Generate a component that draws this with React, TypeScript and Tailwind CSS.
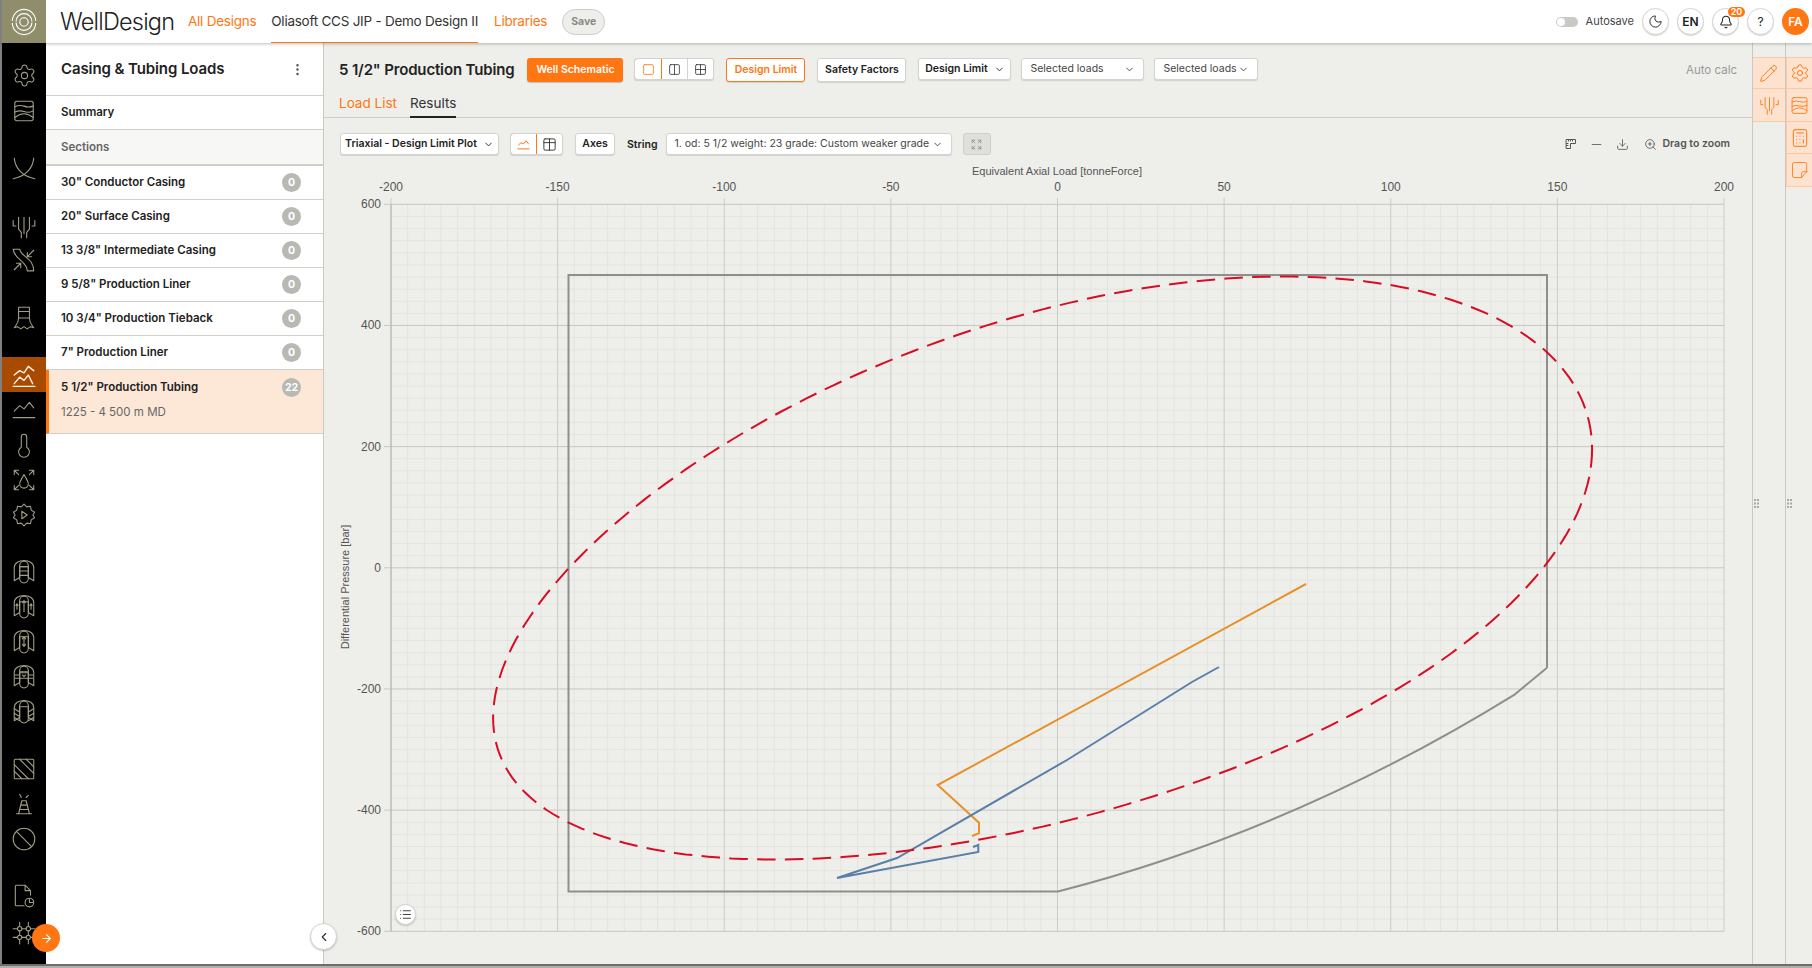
import React from "react";
import { Settings, Pencil, Calculator, Moon, Bell, ChevronDown, ChevronLeft, ArrowRight, EllipsisVertical, Download, ZoomIn, Minus, Square, Columns2, Grid2x2, List } from "lucide-react";

const font = { fontFamily: "Inter, 'Liberation Sans', sans-serif" };

type P = { className?: string; children?: React.ReactNode; sw?: number };
const Ic = ({ className = "w-[26px] h-[26px]", children, sw = 1 }: P) => (
  <svg viewBox="0 0 24 24" fill="none" stroke="currentColor" strokeWidth={sw} strokeLinecap="round" strokeLinejoin="round" className={className}>
    {children}
  </svg>
);

const Layers = (p: P) => (
  <Ic {...p}>
    <rect x="3.5" y="3" width="17" height="18" rx="2" />
    <path d="M3.5 8Q8 6 12 7.5T20.5 7.5M3.5 13Q8 11 12 12.5T20.5 12M3.5 18Q12 11 20.5 18" />
  </Ic>
);
const Cross = (p: P) => (
  <Ic {...p}>
    <path d="M3 2C4 12 11 19 22 21M21 2C20 12 13 19 2 21" />
  </Ic>
);
const Tree = (p: P) => (
  <Ic {...p}>
    <path d="M2 6v5h2.5M22 6v5h-2.5M7 3v11l2.5 3v5M17 3v11l-2.500 3v5M12 3v15" />
  </Ic>
);
const Road = (p: P) => (
  <Ic {...p}>
    <path d="M2 2h6c1 7 13 8 13 20h-6C15 13 3 12 2 2zM21 3l-6 6M15 5v4h4M3 21l6-6M5 15h4v4" />
  </Ic>
);
const Bit = (p: P) => (
  <Ic {...p}>
    <path d="M7 2h10v10H7zM7 6h10M7 12c0 5-2 6-4 9l3-1 3 2 3-2 3 2 3-2 3 1c-2-3-4-4-4-9" />
  </Ic>
);
const Mount1 = (p: P) => (
  <Ic {...p} sw={1.3}>
    <path d="M3 12l5-4 4 2 4-6 5 4M3 20l5-6 4 3 4-5 4 8M2 22.500h20" />
  </Ic>
);
const Mount2 = (p: P) => (
  <Ic {...p}>
    <path d="M3 13l5-5 4 3 5-6 4 5M2 19h20" />
  </Ic>
);
const Thermo = (p: P) => (
  <Ic {...p}>
    <path d="M9.500 14V4.500a2.500 2.500 0 015 0V14a5 5 0 11-5 0z" />
  </Ic>
);
const Drop = (p: P) => (
  <Ic {...p}>
    <path d="M12 7c-2 4-4 6-4 8.500a4 4 0 008 0C16 13 14 11 12 7zM3 3l4 4M3 7V3h4M21 3l-4 4M21 7V3h-4M3 21l4-4M3 17v4h4M21 21l-4-4M21 17v4h-4" />
  </Ic>
);
const GearPlay = (p: P) => (
  <Ic {...p}>
    <path d="M12 2l2.500 2.500 3.500-.5.700 3.500 3 2-1.500 2.500 1.500 2.500-3 2-.7 3.500-3.500-.5L12 22l-2.500-2.500-3.500.5-.7-3.500-3-2L3.800 12 2.300 9.500l3-2L6 4l3.500.5z" />
    <path d="M10 8.500l5 3.500-5 3.500z" />
  </Ic>
);
const Well = ({ v, ...p }: P & { v: number }) => (
  <Ic {...p}>
    <path d="M3 21V9c0-9 18-9 18 0v12l-5-3V8H8v10z" />
    <rect x="8" y="3" width="8" height="20" rx="4" />
    {v === 0 && <path d="M8 8h8M8 12h8M8 16h8" />}
    {v === 1 && <path d="M12 7v10M10.500 9L12 7l1.500 2M5.500 15V10M4.500 11.500l1-1.500 1 1.500M18.500 15V10M17.500 11.500l1-1.500 1 1.500" />}
    {v === 2 && <path d="M12 8v9M10.500 10L12 8l1.500 2M10.500 15l1.500 2 1.500-2" />}
    {v === 3 && <path d="M8 9h8M8 14h8M10.500 11L12 12.500 13.500 11M4 11h3M4 14h3M17 11h3M17 14h3" />}
    {v === 4 && <path d="M3 10l5 3M3 14l5 3M3 18l5 3M21 10l-5 3M21 14l-5 3M21 18l-5 3" />}
  </Ic>
);
const Hatch = (p: P) => (
  <Ic {...p}>
    <rect x="3" y="3" width="18" height="18" rx="1" />
    <path d="M3 8l13 13M3 14l7 7M8 3l13 13M14 3l7 7" />
  </Ic>
);
const Cone = (p: P) => (
  <Ic {...p}>
    <path d="M10 9h4l3 12H7zM9 13h6M8 17h8M5 21h14M8 3l1.500 3M16 4l-2 2" />
  </Ic>
);
const Ban = (p: P) => (
  <Ic {...p}>
    <circle cx="12" cy="12" r="10" />
    <path d="M5 5l14 14" />
  </Ic>
);
const DocClock = (p: P) => (
  <Ic {...p}>
    <path d="M12 21H5a1 1 0 01-1-1V3a1 1 0 011-1h8l5 5v4M13 2v5h5" />
    <circle cx="17" cy="18" r="4" />
    <path d="M17 15v3h3" />
  </Ic>
);
const GridNodes = (p: P) => (
  <Ic {...p}>
    <path d="M8 2v20M16 2v20M2 8h20M2 16h20" />
    <circle cx="8" cy="8" r="2" fill="black" />
    <circle cx="16" cy="8" r="2" fill="black" />
    <circle cx="8" cy="16" r="2" fill="black" />
    <circle cx="16" cy="16" r="2" fill="black" />
  </Ic>
);
const Note = (p: P) => (
  <Ic {...p}>
    <path d="M20 14V5a2 2 0 00-2-2H5a2 2 0 00-2 2v14a2 2 0 002 2h9l6-7zM14 21v-5a2 2 0 012-2h4" />
  </Ic>
);
const Ruler2 = (p: P) => (
  <Ic {...p}>
    <path d="M3 3h18v8h-10v10H3zM7 3v3M11 3v3M15 3v3M3 11h3M3 15h3" />
  </Ic>
);
const LineIcon = (p: P) => (
  <Ic {...p} sw={1.6}>
    <path d="M4 13l4-4 4 2 4-5 4 5M3 19h18" />
  </Ic>
);
const TableIcon = (p: P) => (
  <Ic {...p} sw={1.5}>
    <rect x="3" y="3" width="18" height="18" rx="2" />
    <path d="M3 9h18M12 3v18" />
  </Ic>
);
const ExpandIcon = (p: P) => (
  <Ic {...p} sw={1.5}>
    <path d="M4 4l5 5M4 9V4h5M20 4l-5 5M20 9V4h-5M4 20l5-5M4 15v5h5M20 20l-5-5M20 15v5h-5" />
  </Ic>
);
const Logo = () => (
  <svg viewBox="0 0 30 30" fill="none" stroke="white" strokeWidth="1.2" className="h-[28px] w-[28px]">
    <path d="M2.500 14a12.500 12.500 0 0125 0M27.500 16a12.500 12.500 0 01-25 0" />
    <path d="M6.500 14.500a8.500 8.500 0 0117 0M23.500 15.500a8.500 8.500 0 01-17 0" />
    <circle cx="15" cy="15" r="4.500" />
  </svg>
);
const Grip = () => (
  <svg viewBox="0 0 5 9" className="absolute left-[1px] top-[456px] h-[9px] w-[5px]" fill="#aaaaa5">
    <rect x="0" y="0" width="2" height="2" />
    <rect x="3" y="0" width="2" height="2" />
    <rect x="0" y="3.500" width="2" height="2" />
    <rect x="3" y="3.500" width="2" height="2" />
    <rect x="0" y="7" width="2" height="2" />
    <rect x="3" y="7" width="2" height="2" />
  </svg>
);

const sections = [
  ['30" Conductor Casing', 0],
  ['20" Surface Casing', 0],
  ['13 3/8" Intermediate Casing', 0],
  ['9 5/8" Production Liner', 0],
  ['10 3/4" Production Tieback', 0],
  ['7" Production Liner', 0],
] as const;

const Badge = ({ n }: { n: number }) => (
  <span className="flex h-[19px] w-[19px] items-center justify-center rounded-full bg-[#b9b9b3] text-[10.500px] font-bold text-white">{n}</span>
);

const Btn = ({ children, className = "" }: { children: React.ReactNode; className?: string }) => (
  <div className={"flex shrink-0 items-center justify-center rounded-[3px] border bg-white text-[10.500px] font-semibold shadow-[0_1px_1px_rgba(0,0,0,0.12)] " + (className.includes("border-[#ff7612]") ? "" : "border-[#d4d4ce] text-[#222] ") + className}>{children}</div>
);

const Sel = ({ children, className = "" }: { children: React.ReactNode; className?: string }) => (
  <div className={"flex h-[22px] shrink-0 items-center justify-between rounded-[3px] border border-[#d4d4ce] bg-white px-[8px] text-[10.500px] text-[#444] shadow-[0_1px_1px_rgba(0,0,0,0.12)] " + className}>
    <span>{children}</span>
    <ChevronDown className="h-[11px] w-[11px]" />
  </div>
);

const Round = ({ children }: { children: React.ReactNode }) => (
  <div className="relative flex h-[27px] w-[27px] items-center justify-center rounded-full border border-[#d4d4ce] bg-white text-[12px] font-semibold text-[#222] shadow-[0_1px_1px_rgba(0,0,0,0.15)]">{children}</div>
);

const X0 = 391, X1 = 1724, Y0 = 204.3, Y1 = 931.3;

function Chart() {
  const minorV: React.ReactNode[] = [];
  const minorH: React.ReactNode[] = [];
  for (let i = 0; i <= 80; i++) {
    const x = X0 + ((X1 - X0) * i) / 80;
    if (i % 10) minorV.push(<line key={i} x1={x} x2={x} y1={Y0} y2={Y1} stroke="#e3e4df" />);
  }
  for (let i = 0; i <= 60; i++) {
    const y = Y0 + ((Y1 - Y0) * i) / 60;
    if (i % 10) minorH.push(<line key={i} x1={X0} x2={X1} y1={y} y2={y} stroke="#e3e4df" />);
  }
  const xt = [-200, -150, -100, -50, 0, 50, 100, 150, 200];
  const yt = [600, 400, 200, 0, -200, -400, -600];
  const pts: string[] = [];
  for (let i = 0; i <= 240; i++) {
    const t = (i / 240) * Math.PI * 2;
    const phi = -0.48 + 0.06 * Math.cos(t);
    pts.push((1042.6 + 549.5 * Math.cos(t)).toFixed(1) + "," + (568 + 291.5 * Math.sin(t + phi)).toFixed(1));
  }
  return (
    <svg viewBox="324 160 1428 804" className="block h-[804px] w-[1428px] shrink-0" style={{ fontFamily: "'Liberation Sans', sans-serif" }}>
      {minorV}
      {minorH}
      {xt.map((v, i) => {
        const x = X0 + (i * (X1 - X0)) / 8;
        return (
          <g key={v}>
            <line x1={x} x2={x} y1={198} y2={Y1} stroke="#cbccc7" />
            <text x={x} y={191} textAnchor="middle" fontSize="12" fill="#555">{v}</text>
          </g>
        );
      })}
      {yt.map((v, i) => {
        const y = Y0 + (i * (Y1 - Y0)) / 6;
        return (
          <g key={v}>
            <line x1={384} x2={X1} y1={y} y2={y} stroke="#c6c7c2" />
            <text x={381} y={y + 4} textAnchor="end" fontSize="12" fill="#555">{v}</text>
          </g>
        );
      })}
      <line x1={X0} x2={X0} y1={Y0} y2={Y1} stroke="#b4b5b0" />
      <text x={1057} y={175} textAnchor="middle" fontSize="11" fill="#555">Equivalent Axial Load [tonneForce]</text>
      <text transform="translate(349,587) rotate(-90)" textAnchor="middle" fontSize="11" fill="#555">Differential Pressure [bar]</text>
      <path fill="none" stroke="#8e8e8c" strokeWidth="2" d="M1547 667.700V275H568.500V891.500H1057.900Q1293.500 831 1515 694.300L1547 667.700" />
      <polyline fill="none" stroke="#e8902a" strokeWidth="2" points="1306,584 937.700,785 979,822.700 979,833.300 972,836" />
      <polyline fill="none" stroke="#5b7fa8" strokeWidth="2" points="1219,667 1192,682 1136,717 1067,760 897,858 837,878 978.300,852 978.300,845 973,847" />
      <polygon fill="none" stroke="#d80d24" strokeWidth="2" strokeDasharray="18.500 9.300" points={pts.join(" ")} />
    </svg>
  );
}

const Rail = ({ children, className = "" }: { children: React.ReactNode; className?: string }) => (
  <div className={"flex h-[35px] w-full shrink-0 items-center justify-center " + className}>{children}</div>
);

export default function App() {
  return (
    <div className="flex h-[968px] w-full flex-col overflow-hidden whitespace-nowrap bg-white" style={font}>
      <header className="relative z-10 flex h-[43px] shrink-0 items-stretch bg-white shadow-[0_1px_3px_rgba(0,0,0,0.25)]">
        <div className="flex w-[46px] items-center justify-center border-l-2 border-[#808080] bg-[#8f8d6a]"><Logo /></div>
        <div className="ml-[14px] flex w-[128px] items-center text-[23.500px] font-light tracking-[-0.8px] text-[#222]">WellDesign</div>
        <div className="flex items-center text-[13.500px] tracking-[-0.25px] text-[#ff7612]">All Designs</div>
        <div className="ml-[15px] flex items-center border-b border-[#ff7612] text-[13.500px] tracking-[-0.25px] text-[#333]">Oliasoft CCS JIP - Demo Design II</div>
        <div className="ml-[16px] flex items-center text-[13.500px] tracking-[-0.25px] text-[#ff7612]">Libraries</div>
        <div className="ml-[15px] flex items-center">
          <div className="flex h-[26px] w-[43px] items-center justify-center rounded-full border border-[#ccc] bg-[#eeefeb] text-[10.500px] font-bold text-[#8a8a86]">Save</div>
        </div>
        <div className="ml-auto mr-[3px] flex items-center">
          <div className="flex h-[10px] w-[22px] items-center rounded-full bg-[#c9c9c6]"><div className="ml-px h-[8px] w-[8px] rounded-full bg-white" /></div>
          <span className="ml-[8px] mr-[8px] text-[11px] text-[#444]">Autosave</span>
          <div className="flex items-center gap-[8px]">
            <Round><Moon className="h-[15px] w-[15px]" strokeWidth={1.5} /></Round>
            <Round>EN</Round>
            <Round>
              <Bell className="h-[14px] w-[14px]" strokeWidth={1.8} />
              <span className="absolute left-[15px] top-[-2px] flex h-[10px] w-[17px] items-center justify-center rounded-full bg-[#ff7612] text-[9px] font-semibold text-white">20</span>
            </Round>
            <Round><span className="font-normal">?</span></Round>
            <div className="flex h-[27px] w-[27px] items-center justify-center rounded-full bg-[#ff7612] text-[12px] font-semibold text-white">FA</div>
          </div>
        </div>
      </header>

      <div className="relative flex min-h-0 flex-1">
        <aside className="relative z-[5] flex w-[46px] shrink-0 flex-col border-l-2 border-[#808080] bg-black text-[#a09e85]">
          <Rail className="mt-[15px]"><Settings className="h-[25px] w-[25px]" strokeWidth={1} /></Rail>
          <Rail><Layers /></Rail>
          <Rail className="mt-[23px]"><Cross /></Rail>
          <Rail className="mt-[23px]"><Tree /></Rail>
          <Rail className="mt-[-2px]"><Road /></Rail>
          <Rail className="mt-[23px]"><Bit /></Rail>
          <Rail className="mt-[22px] bg-[#a84a00] text-[#fff3e6]"><Mount1 /></Rail>
          <Rail><Mount2 /></Rail>
          <Rail><Thermo /></Rail>
          <Rail><Drop /></Rail>
          <Rail><GearPlay /></Rail>
          <Rail className="mt-[21px]"><Well v={0} /></Rail>
          <Rail><Well v={1} /></Rail>
          <Rail><Well v={2} /></Rail>
          <Rail><Well v={3} /></Rail>
          <Rail><Well v={4} /></Rail>
          <Rail className="mt-[23px]"><Hatch /></Rail>
          <Rail><Cone /></Rail>
          <Rail><Ban /></Rail>
          <Rail className="mt-[22px]"><DocClock /></Rail>
          <Rail className="mt-[2px]"><GridNodes /></Rail>
        </aside>

        <section className="flex w-[278px] shrink-0 flex-col border-r border-[#c9c9c2] bg-white">
          <div className="flex h-[53px] items-center justify-between border-b border-[#d0d0c9] pl-[15px] pr-[18px]">
            <span className="text-[15px] font-semibold tracking-[-0.1px] text-[#222]">Casing &amp; Tubing Loads</span>
            <EllipsisVertical className="h-[15px] w-[15px] text-[#555]" />
          </div>
          <div className="flex h-[34px] items-center border-b border-[#d0d0c9] pl-[15px] text-[11.500px] font-semibold text-[#222]">Summary</div>
          <div className="flex h-[36px] items-center border-b-2 border-[#d0d0c9] bg-[#f7f7f5] pl-[15px] pt-[1px] text-[11.500px] font-semibold text-[#666]">Sections</div>
          {sections.map(([t, n]) => (
            <div key={t} className="flex h-[34px] items-center justify-between border-b border-[#d0d0c9] pl-[15px] pr-[22px] text-[11.500px] font-semibold text-[#222]">
              <span>{t}</span>
              <Badge n={n} />
            </div>
          ))}
          <div className="flex h-[64px] flex-col border-b border-l-[3px] border-[#d0d0c9] border-l-[#ff7612] bg-[#fde8d8] pl-[12px] pr-[22px] pt-[8px]">
            <div className="flex items-center justify-between text-[11.500px] font-semibold text-[#222]">
              <span>5 1/2" Production Tubing</span>
              <Badge n={22} />
            </div>
            <div className="mt-[7px] text-[11.500px] text-[#666]">1225 - 4 500 m MD</div>
          </div>
        </section>

        <main className="flex w-[1428px] shrink-0 flex-col bg-[#eeefeb]">
          <div className="flex h-[51px] shrink-0 items-start pl-[15px] pr-[15px] pt-[15px]">
            <span className="mr-[12px] mt-[1px] text-[15px] font-semibold tracking-[-0.15px] text-[#222]">5 1/2" Production Tubing</span>
            <div className="ml-[1px] flex h-[24px] w-[96px] shrink-0 items-center justify-center rounded-[3px] bg-[#ff7612] text-[10.500px] font-semibold text-white shadow-[0_1px_1px_rgba(0,0,0,0.2)]">Well Schematic</div>
            <div className="ml-[11px] flex h-[22px] shrink-0 overflow-hidden rounded-[3px] border border-[#d4d4ce] bg-white text-[#333] shadow-[0_1px_1px_rgba(0,0,0,0.12)]">
              <div className="-my-px -ml-px flex w-[28px] items-center justify-center rounded-l-[3px] border border-[#ff7612] text-[#ff7612]"><Square className="h-[13px] w-[13px]" strokeWidth={1.5} /></div>
              <div className="flex w-[26px] items-center justify-center border-r border-[#d4d4ce]"><Columns2 className="h-[13px] w-[13px]" strokeWidth={1.5} /></div>
              <div className="flex w-[25px] items-center justify-center"><Grid2x2 className="h-[13px] w-[13px]" strokeWidth={1.5} /></div>
            </div>
            <Btn className="ml-[12px] h-[24px] w-[79px] border-[#ff7612] text-[#ff7612]">Design Limit</Btn>
            <Btn className="ml-[12px] h-[24px] w-[89px]">Safety Factors</Btn>
            <Btn className="ml-[12px] h-[22px] w-[93px] gap-[6px]">Design Limit<ChevronDown className="h-[11px] w-[11px]" /></Btn>
            <Sel className="ml-[10px] w-[123px]">Selected loads</Sel>
            <Sel className="ml-[10px] w-[104px]">Selected loads</Sel>
            <span className="ml-auto mt-[4px] text-[11.500px] text-[#999]">Auto calc</span>
          </div>
          <div className="flex h-[24px] shrink-0 items-start gap-[13px] border-b border-[#d0d0c9] pl-[15px] text-[13.500px] leading-[18px]">
            <span className="text-[#ff7612]">Load List</span>
            <span className="h-[24px] border-b-2 border-[#222] text-[#333]">Results</span>
          </div>
          <div className="flex h-[42px] shrink-0 items-start pl-[16px] pr-[22px] pt-[15px]">
            <Btn className="h-[22px] w-[159px] gap-[6px]">Triaxial - Design Limit Plot<ChevronDown className="h-[11px] w-[11px]" /></Btn>
            <div className="ml-[11px] flex h-[22px] shrink-0 overflow-hidden rounded-[3px] border border-[#d4d4ce] bg-white text-[#333] shadow-[0_1px_1px_rgba(0,0,0,0.12)]">
              <div className="-my-px -ml-px flex w-[27px] items-center justify-center rounded-l-[3px] border border-[#ff7612] text-[#ff7612]"><LineIcon className="h-[15px] w-[15px]" /></div>
              <div className="flex w-[25px] items-center justify-center"><TableIcon className="h-[15px] w-[15px]" /></div>
            </div>
            <Btn className="ml-[12px] h-[22px] w-[40px]">Axes</Btn>
            <span className="ml-[12px] mt-[4px] text-[10.500px] font-semibold text-[#222]">String</span>
            <Sel className="ml-[8px] w-[286px]">1. od: 5 1/2 weight: 23 grade: Custom weaker grade</Sel>
            <div className="ml-[11px] flex h-[22px] w-[28px] shrink-0 items-center justify-center rounded-[3px] border border-[#d0d0c9] bg-[#dfe0db] text-[#8a8b86]"><ExpandIcon className="h-[13px] w-[13px]" /></div>
            <div className="ml-auto flex h-[22px] items-center text-[#555]">
              <Ruler2 className="h-[12px] w-[12px]" sw={2} />
              <Minus className="ml-[12px] h-[15px] w-[15px]" strokeWidth={1.3} />
              <Download className="ml-[12px] h-[13px] w-[13px]" strokeWidth={1.5} />
              <ZoomIn className="ml-[15px] h-[13px] w-[13px]" strokeWidth={1.5} />
              <span className="ml-[5px] text-[10.500px] font-semibold text-[#555]">Drag to zoom</span>
            </div>
          </div>
          <Chart />
        </main>

        <div className="relative w-[33px] shrink-0 border-l border-[#c9c9c2] bg-[#eeefeb] text-[#ff7612]">
          <div className="mt-[14px] flex h-[32px] items-center justify-center border-y border-[#fcc9a0] bg-[#fde3cf] pr-[2px]"><Pencil className="h-[19px] w-[19px]" strokeWidth={1.2} /></div>
          <div className="flex h-[33px] items-center justify-center border-b border-[#fcc9a0] bg-[#fde3cf]"><Tree className="h-[21px] w-[21px]" /></div>
          <Grip />
        </div>
        <div className="relative w-[27px] shrink-0 border-l border-[#c9c9c2] bg-[#eeefeb] text-[#ff7612]">
          <div className="mt-[14px] flex h-[32px] items-center justify-center border-y border-l border-[#fcc9a0] bg-[#fde3cf]"><Settings className="h-[20px] w-[20px]" strokeWidth={1.2} /></div>
          <div className="flex h-[33px] items-center justify-center border-b border-l border-[#fcc9a0] bg-[#fde3cf]"><Layers className="h-[21px] w-[21px]" /></div>
          <div className="flex h-[32px] items-center justify-center border-b border-l border-[#fcc9a0] bg-[#fde3cf]"><Calculator className="h-[20px] w-[20px]" strokeWidth={1.2} /></div>
          <div className="flex h-[33px] items-center justify-center border-b border-l border-[#fcc9a0] bg-[#fde3cf]"><Note className="h-[20px] w-[20px]" /></div>
          <Grip />
        </div>

        <button className="absolute left-[310px] top-[880px] z-10 flex h-[27px] w-[27px] items-center justify-center rounded-full border border-[#d4d4ce] bg-white text-[#333] shadow-[0_1px_2px_rgba(0,0,0,0.2)]"><ChevronLeft className="h-[14px] w-[14px]" /></button>
        <button className="absolute left-[395px] top-[861px] z-10 flex h-[21px] w-[21px] items-center justify-center rounded-full border border-[#d4d4ce] bg-white text-[#444] shadow-[0_1px_2px_rgba(0,0,0,0.2)]"><List className="h-[13px] w-[13px]" /></button>
        <button className="absolute left-[32px] top-[881px] z-10 flex h-[28px] w-[28px] items-center justify-center rounded-full bg-[#ff7612] text-white"><ArrowRight className="h-[13px] w-[13px]" /></button>
      </div>
      <div className="h-[4px] shrink-0 border-t-2 border-[#6d6d6d] bg-[#b0b0a8]" />
    </div>
  );
}
